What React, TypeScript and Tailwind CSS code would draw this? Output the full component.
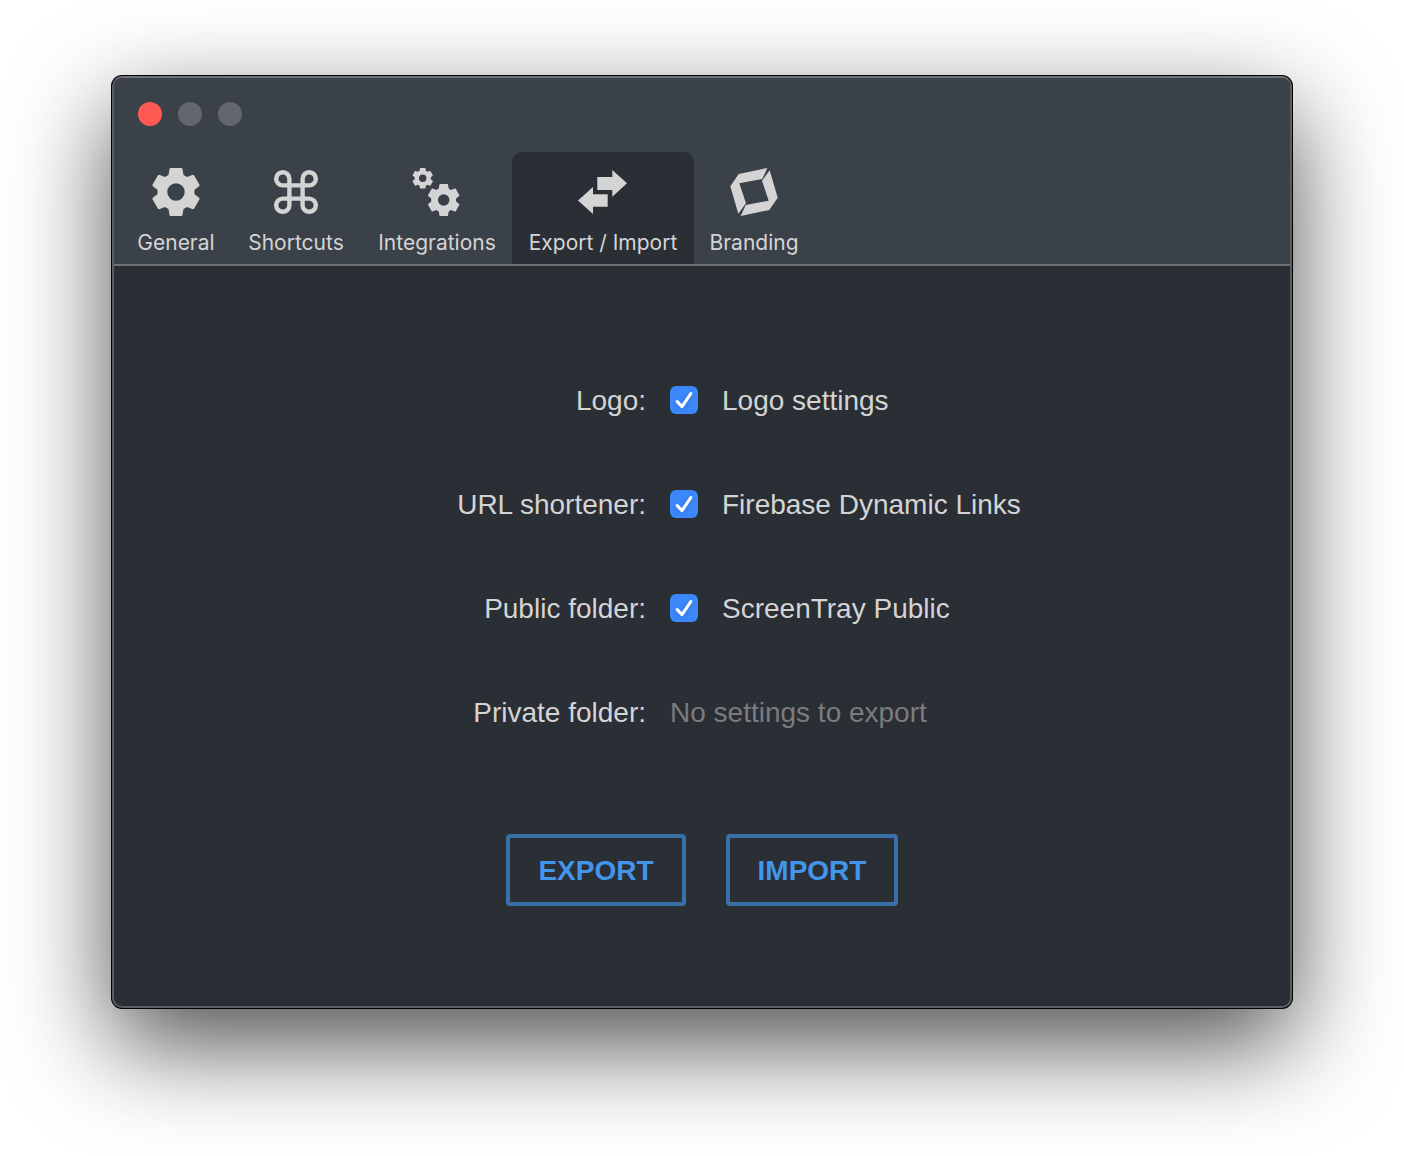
import React from "react";

function Gear({ cx, cy, r, hole }: { cx: number; cy: number; r: number; hole: number }) {
  const s = r / 24;
  return (
    <g transform={`translate(${cx} ${cy}) scale(${s})`}>
      <circle r={(18 + hole) / 2} fill="none" stroke="currentColor" strokeWidth={18 - hole} />
      {[0, 60, 120, 180, 240, 300].map((angle) => (
        <path
          key={angle}
          transform={`rotate(${angle})`}
          d="M-5.5 -24H5.5Q6.3 -24 6.5 -23L7.4 -17.2L11.5 -14L6 -11H-6L-11.5 -14L-7.4 -17.2L-6.5 -23Q-6.3 -24 -5.5 -24Z"
        />
      ))}
    </g>
  );
}

function Icon({ children, viewBox = "0 0 48 48" }: { children: React.ReactNode; viewBox?: string }) {
  return (
    <svg viewBox={viewBox} className="size-12 overflow-visible" fill="currentColor" aria-hidden="true">
      {children}
    </svg>
  );
}

const tabs = [
  {
    label: "General",
    width: "w-[108px]",
    icon: (
      <Icon>
        <Gear cx={24} cy={24} r={24} hole={8.7} />
      </Icon>
    ),
  },
  {
    label: "Shortcuts",
    width: "w-[132px]",
    icon: (
      <Icon viewBox="1.1 1.1 21.8 21.8">
        <path
          d="M15 6v12a3 3 0 1 0 3-3H6a3 3 0 1 0 3 3V6a3 3 0 1 0-3 3h12a3 3 0 1 0-3-3"
          fill="none"
          stroke="currentColor"
          strokeWidth="2"
        />
      </Icon>
    ),
  },
  {
    label: "Integrations",
    width: "w-[150px]",
    icon: (
      <Icon>
        <Gear cx={9.7} cy={10.3} r={10.3} hole={8.7} />
        <Gear cx={30.7} cy={32} r={16} hole={8.7} />
      </Icon>
    ),
  },
  {
    label: "Export / Import",
    width: "w-[182px]",
    active: true,
    icon: (
      <Icon>
        <path d="M18.3 9H33.3V2L48 15.3L33.3 28.7V22H18.3Z" />
        <path d="M28.7 26.3H14V19L-1 32.5L14 46V38.7H28.7Z" />
      </Icon>
    ),
  },
  {
    label: "Branding",
    width: "w-[120px]",
    icon: (
      <Icon>
        <path d="M37.3 0L8.7 6L0.3 18.3L8.3 45.7L16 35.3L9.3 15.3L32.3 11Z" />
        <path d="M10.7 48L39.3 42L47.7 29.7L39.7 2.3L32 12.7L38.7 32.7L15.7 37Z" />
      </Icon>
    ),
  },
];

const rows = [
  { id: "logo", label: "Logo:", option: "Logo settings" },
  { id: "shortener", label: "URL shortener:", option: "Firebase Dynamic Links" },
  { id: "public", label: "Public folder:", option: "ScreenTray Public" },
  { id: "private", label: "Private folder:", option: null },
];

function Checkbox({ id }: { id: string }) {
  return (
    <span className="grid size-7 shrink-0">
      <input
        id={id}
        type="checkbox"
        defaultChecked
        className="peer col-start-1 row-start-1 size-7 appearance-none rounded-md bg-zinc-600 checked:bg-[#3b87fb]"
      />
      <svg
        viewBox="0 0 28 28"
        className="pointer-events-none col-start-1 row-start-1 size-7 opacity-0 drop-shadow-sm peer-checked:opacity-100"
        aria-hidden="true"
      >
        <path
          d="M7.2 15.6L12 20.6L20.8 7.6"
          fill="none"
          stroke="white"
          strokeWidth="3"
          strokeLinecap="round"
          strokeLinejoin="round"
        />
      </svg>
    </span>
  );
}

export default function App() {
  return (
    <div className="min-h-screen bg-white px-28 pt-[76px] pb-[148px] font-['Liberation_Sans',Arial,sans-serif]">
      <main className="overflow-hidden rounded-[10px] border-2 border-[#5b5e62] border-t-[#6f7378] bg-[#2a2e35] text-[#d4d4d4] shadow-[0_0_0_1px_#000,0_36px_100px_rgba(0,0,0,0.7)]">
        <header className="border-b-2 border-[#717171] bg-[#3b4148]">
          <div className="flex gap-4 px-6 pt-6 pb-[26px]">
            <button aria-label="Close" className="size-6 rounded-full bg-[#ff5a52]" />
            <button aria-label="Minimize" className="size-6 rounded-full bg-[#63666f]" />
            <button aria-label="Zoom" className="size-6 rounded-full bg-[#63666f]" />
          </div>
          <nav className="flex px-2 font-[Inter,sans-serif]">
            {tabs.map((tab) => (
              <button
                key={tab.label}
                aria-current={tab.active ? "page" : undefined}
                className={`${tab.width} ${
                  tab.active ? "bg-[#2a2e35]" : ""
                } flex h-28 flex-col items-center gap-3 rounded-t-[10px] pt-4 text-[21px] leading-[30px] whitespace-nowrap`}
              >
                {tab.icon}
                {tab.label}
              </button>
            ))}
          </nav>
        </header>

        <form className="pt-[82px] pb-[100px] text-[28px] leading-8" onSubmit={(e) => e.preventDefault()}>
          {rows.map((row) => (
            <div key={row.id} className="grid h-[104px] grid-cols-[calc(50%-56px)_1fr] items-center">
              <span className="pt-0.5 text-right">{row.label}</span>
              {row.option ? (
                <div className="flex items-center gap-6 pl-6">
                  <Checkbox id={row.id} />
                  <label htmlFor={row.id} className="pt-0.5">
                    {row.option}
                  </label>
                </div>
              ) : (
                <span className="pt-0.5 pl-6 text-[#7b7c7e]">No settings to export</span>
              )}
            </div>
          ))}
          <div className="mt-[70px] flex justify-center gap-10 font-bold text-[#4295ea]">
            <button type="button" className="h-[72px] w-[180px] rounded border-4 border-[#3a70a8] pt-0.5">
              EXPORT
            </button>
            <button type="button" className="h-[72px] w-[172px] rounded border-4 border-[#3a70a8] pt-0.5">
              IMPORT
            </button>
          </div>
        </form>
      </main>
    </div>
  );
}
